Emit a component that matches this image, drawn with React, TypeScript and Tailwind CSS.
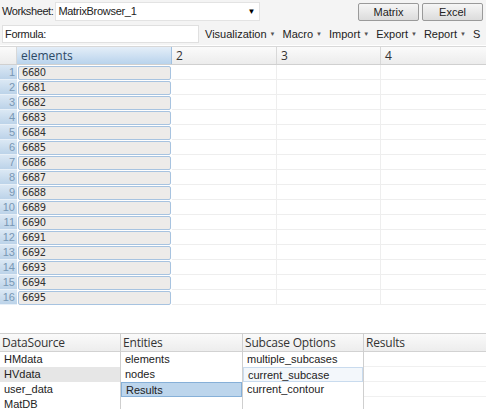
const rows = Array.from({ length: 16 }, (_, i) => ({ n: i + 1, v: String(6680 + i) }));

const menus = ["Visualization", "Macro", "Import", "Export", "Report"];

const panels = [
  { title: "DataSource", w: "w-[121px]", items: ["HMdata", "HVdata", "user_data", "MatDB"], sel: 1, selKind: "gray" },
  { title: "Entities", w: "w-[122px]", items: ["elements", "nodes", "Results"], sel: 2, selKind: "blue" },
  { title: "Subcase Options", w: "w-[121px]", items: ["multiple_subcases", "current_subcase", "current_contour"], sel: 1, selKind: "hover" },
  { title: "Results", w: "flex-1", items: [], sel: -1, selKind: "" },
];

function Caret() {
  return <span className="ml-[3px] text-[6px] text-[#555] align-middle">▼</span>;
}

export default function App() {
  return (
    <div className="w-[486px] h-[409px] overflow-hidden bg-white text-[#222] font-['Liberation_Sans',Arial,sans-serif] text-[11px] flex flex-col">
      {/* toolbar */}
      <div className="bg-[#f4f4f4] flex flex-col">
        <div className="h-[23px] flex items-center pl-[2px] pr-[3px]">
          <span className="shrink-0 whitespace-nowrap text-[11px] tracking-[-0.4px] mr-[2px]">Worksheet:</span>
          <div className="shrink-0 w-[205px] h-[19px] bg-white border border-[#e3e3e3] flex items-center justify-between pl-[2px] pr-[4px]">
            <span className="tracking-[-0.3px]">MatrixBrowser_1</span>
            <span className="text-[8px] text-black">▼</span>
          </div>
          <div className="flex-1" />
          <button className="shrink-0 w-[61px] h-[18px] mr-[3px] rounded-[2px] border border-[#9a9a9a] bg-gradient-to-b from-[#f6f6f6] to-[#dcdcdc] text-[11px]">
            Matrix
          </button>
          <button className="shrink-0 w-[61px] h-[18px] rounded-[2px] border border-[#9a9a9a] bg-gradient-to-b from-[#f6f6f6] to-[#dcdcdc] text-[11px]">
            Excel
          </button>
        </div>
        <div className="h-[22px] flex items-center pl-[2px] overflow-hidden">
          <div className="shrink-0 w-[197px] h-[18px] bg-white border border-[#e0e0e0] flex items-center pl-[2px] tracking-[-0.3px]">
            Formula:
          </div>
          <div className="shrink-0 flex items-center ml-[6px] gap-[7px] whitespace-nowrap">
            {menus.map((m) => (
              <span key={m}>
                {m}
                <Caret />
              </span>
            ))}
            <span>S</span>
          </div>
        </div>
      </div>

      {/* grid */}
      <div className="border-t border-[#d8d8d8] mt-[1px]">
        <div className="h-[18px] flex bg-gradient-to-b from-[#fbfbfb] to-[#ececec] border-b border-[#d0d0d0] font-['Open_Sans',sans-serif] text-[12px] text-[#333]">
          <div className="w-[17px] border-r border-[#d8d8d8]" />
          <div className="w-[155px] bg-gradient-to-b from-[#e4eef8] to-[#b9d3ec] border-r border-[#9fc0e0] pl-[4px] flex items-center text-[#2d4a66]">
            elements
          </div>
          <div className="w-[105px] border-r border-[#d8d8d8] pl-[4px] flex items-center">2</div>
          <div className="w-[104px] border-r border-[#d8d8d8] pl-[4px] flex items-center">3</div>
          <div className="flex-1 pl-[4px] flex items-center">4</div>
        </div>
        {rows.map((r) => (
          <div key={r.n} className="h-[15px] flex">
            <div className="w-[17px] bg-gradient-to-b from-[#dbe8f4] to-[#bcd3e9] border-b border-[#e8f0f8] text-[#7897b4] text-right pr-[2px] leading-[15px] text-[11px]">
              {r.n}
            </div>
            <div className="w-[155px] px-[1px] flex items-center">
              <div className="w-full h-[14px] bg-[#edebe9] border border-[#a7c3e0] rounded-[2px] pl-[3px] leading-[12px] text-[11px] font-['DejaVu_Sans_Condensed','DejaVu_Sans',sans-serif] text-[#333] tracking-[-0.4px]">
                {r.v}
              </div>
            </div>
            <div className="w-[105px] border-r border-b border-[#eeeeee]" />
            <div className="w-[104px] border-r border-b border-[#eeeeee]" />
            <div className="flex-1 border-b border-[#eeeeee]" />
          </div>
        ))}
      </div>

      <div className="flex-1" />

      {/* bottom panels */}
      <div className="h-[76px] flex border-t border-[#d0d0d0]">
        {panels.map((p, pi) => (
          <div key={p.title} className={`${p.w} flex flex-col ${pi < 3 ? "border-r border-[#cfcfcf]" : ""}`}>
            <div className="h-[18px] flex items-center pl-[2px] bg-gradient-to-b from-[#fafafa] to-[#ededed] border-b border-[#d2d2d2] font-['Open_Sans',sans-serif] text-[12px] text-[#333] tracking-[-0.2px]">
              {p.title}
            </div>
            <div className="flex flex-col">
              {p.items.map((it, i) => {
                let cls = "h-[15px] leading-[15px] pl-[4px] text-[11px]";
                if (i === p.sel && p.selKind === "gray") cls += " bg-[#e6e6e6]";
                if (i === p.sel && p.selKind === "blue") cls += " bg-[#bcd5ec] border border-[#86b0d8] leading-[13px]";
                if (i === p.sel && p.selKind === "hover") cls += " bg-[#f3f7fb] border border-[#c9dbee] leading-[13px]";
                return (
                  <div key={it} className={`${cls} ${pi === 0 ? "pl-[2px]" : ""}`}>
                    {it}
                  </div>
                );
              })}
              {pi === 3 && (
                <>
                  <div className="h-[15px] border-b border-[#f0f0f0]" />
                  <div className="h-[15px] border-b border-[#f0f0f0]" />
                  <div className="h-[15px] border-b border-[#f0f0f0]" />
                </>
              )}
            </div>
          </div>
        ))}
      </div>
    </div>
  );
}
